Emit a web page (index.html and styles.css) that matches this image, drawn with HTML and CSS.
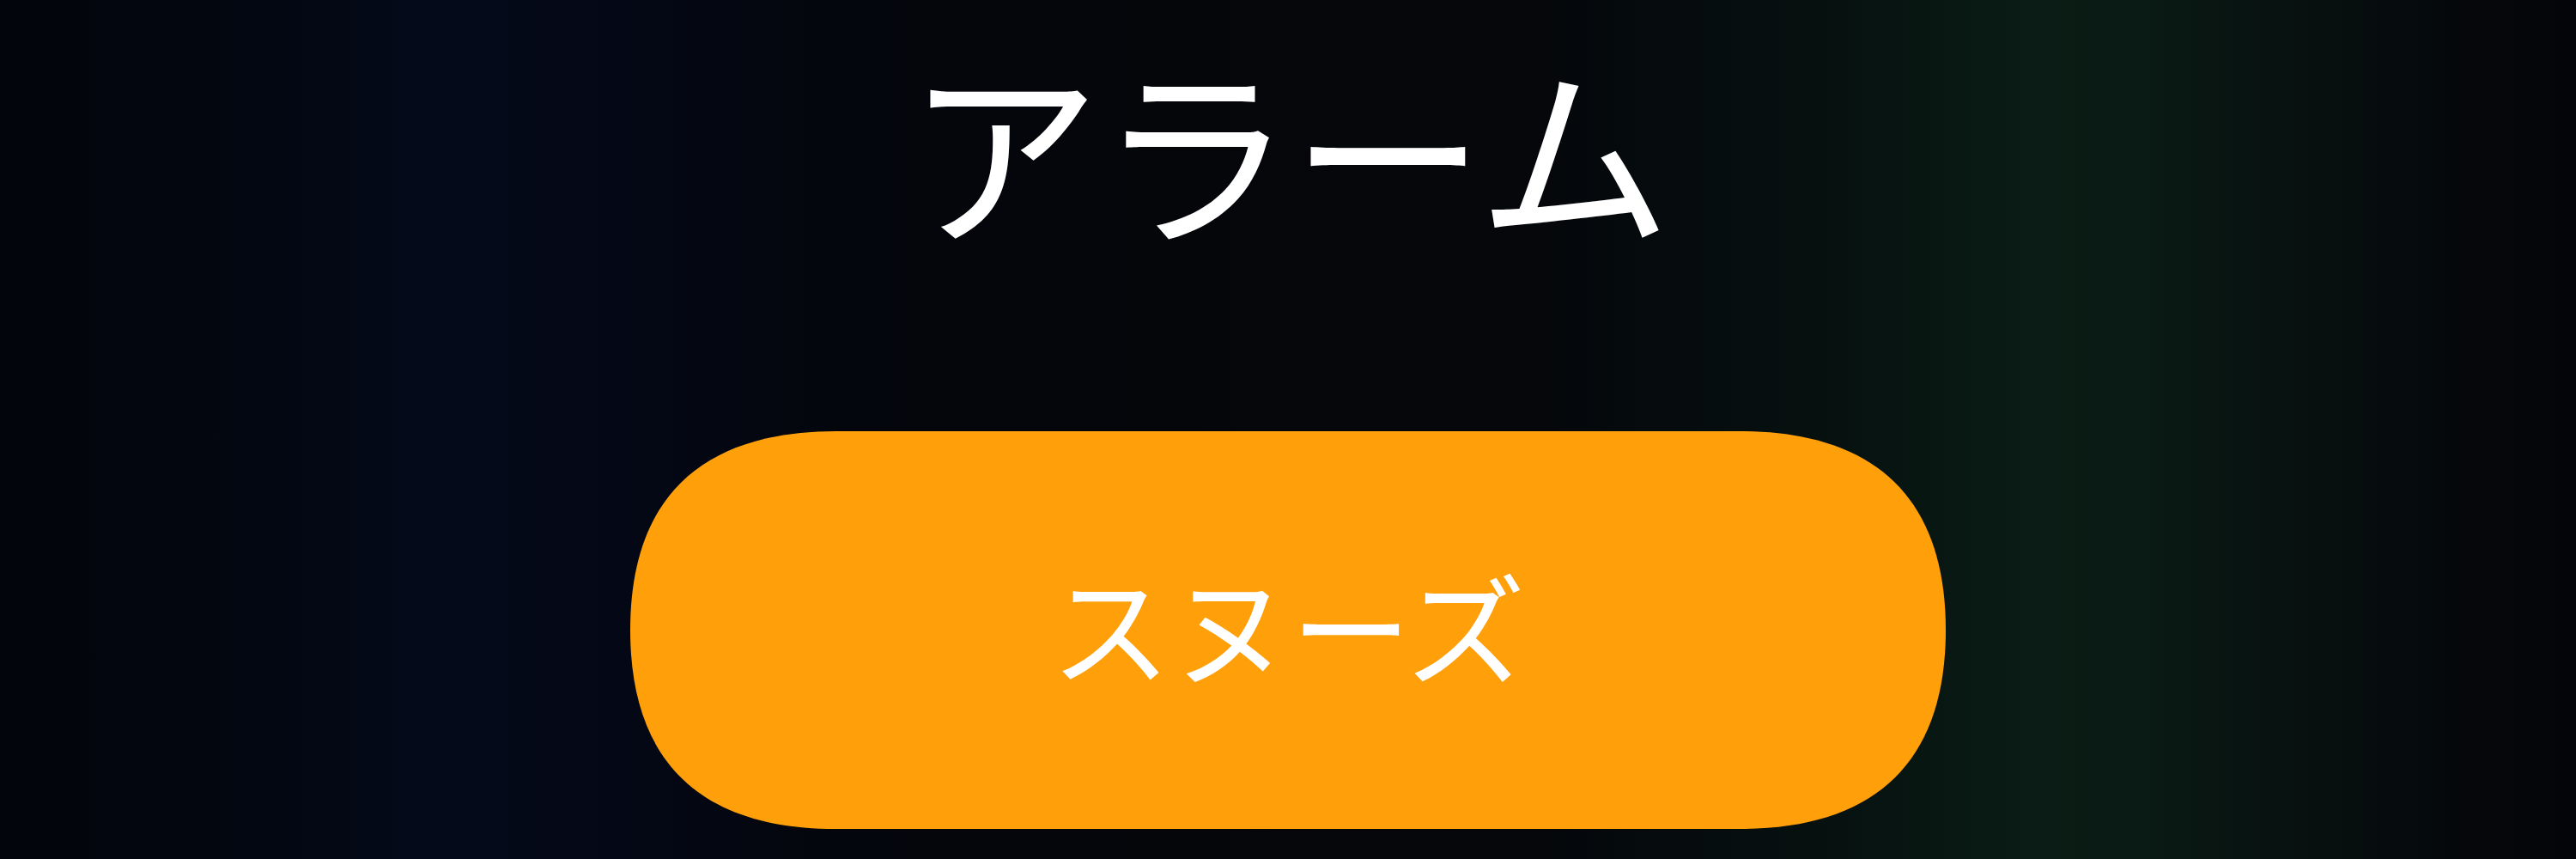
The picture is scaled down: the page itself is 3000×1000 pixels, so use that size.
FILE: index.html
```html
<!DOCTYPE html>
<html lang="ja">
<head>
<meta charset="utf-8">
<title>アラーム</title>
<link rel="stylesheet" href="styles.css">
</head>
<body>
<main class="screen">
  <h1 class="title">アラーム</h1>
  <button class="snooze" type="button"><span class="snooze-label">スヌーズ</span></button>
</main>
</body>
</html>
```

FILE: styles.css
```css
html, body {
  margin: 0;
  padding: 0;
  height: 100%;
}

body {
  background:
    linear-gradient(to right,
      #03050d 0%,
      #03060f 8%,
      #040a1a 17%,
      #040816 24%,
      #04060d 32%,
      #05060a 45%,
      #05070b 60%,
      #06100f 70%,
      #0a1c15 79%,
      #0a1a14 83%,
      #07100f 90%,
      #05070a 96%,
      #040509 100%);
  font-family: "Noto Sans CJK JP", "Noto Sans", sans-serif;
  color: #ffffff;
  overflow: hidden;
}

.screen {
  display: flex;
  flex-direction: column;
  align-items: center;
  width: 3000px;
  height: 1000px;
}

.title {
  margin: 58px 0 0 0;
  font-size: 226px;
  font-weight: 400;
  line-height: 1;
  letter-spacing: -2px;
}

.snooze {
  margin-top: 218px;
  width: 1532px;
  height: 463px;
  border: 0;
  padding: 0 0 16px 0;
  box-sizing: border-box;
  background: #ff9f0a;
  clip-path: path("M 0 231.5 C 0 80, 80 0, 240 0 L 1292 0 C 1452 0, 1532 80, 1532 231.5 C 1532 383, 1452 463, 1292 463 L 240 463 C 80 463, 0 383, 0 231.5 Z");
  display: flex;
  align-items: center;
  justify-content: center;
  color: #ffffff;
  font-family: "Noto Sans CJK JP", "Noto Sans", sans-serif;
  cursor: pointer;
}

.snooze-label {
  font-size: 140px;
  font-weight: 400;
  line-height: 1;
}
```
